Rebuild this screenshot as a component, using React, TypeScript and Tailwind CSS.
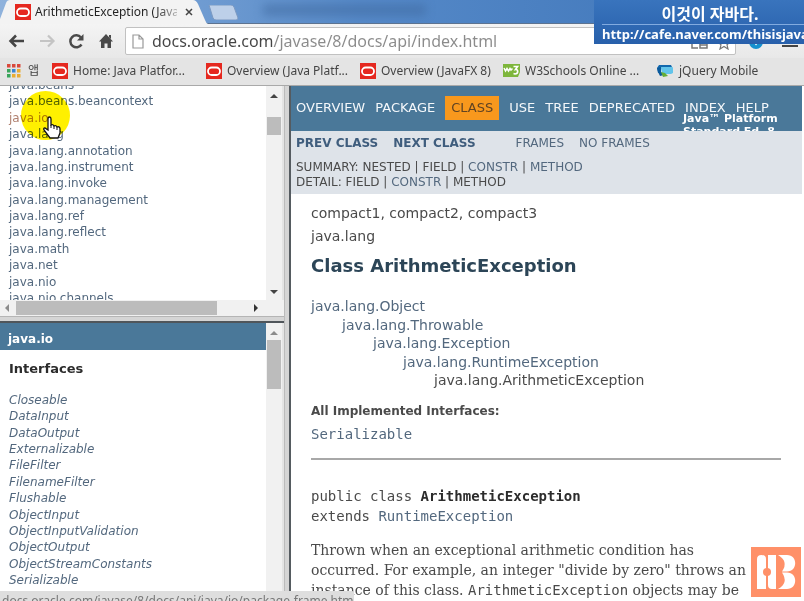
import type { ReactNode } from "react";

const packages = [
  "java.beans",
  "java.beans.beancontext",
  "java.io",
  "java.lang",
  "java.lang.annotation",
  "java.lang.instrument",
  "java.lang.invoke",
  "java.lang.management",
  "java.lang.ref",
  "java.lang.reflect",
  "java.math",
  "java.net",
  "java.nio",
  "java.nio.channels",
];

const interfaces = [
  "Closeable",
  "DataInput",
  "DataOutput",
  "Externalizable",
  "FileFilter",
  "FilenameFilter",
  "Flushable",
  "ObjectInput",
  "ObjectInputValidation",
  "ObjectOutput",
  "ObjectStreamConstants",
  "Serializable",
];

function OracleIcon() {
  return (
    <svg viewBox="0 0 16 16" className="size-4 shrink-0" aria-hidden="true">
      <rect width="16" height="16" fill="#e5281f" />
      <rect x="2" y="4.5" width="12" height="7.5" rx="3.75" fill="none" stroke="#fff" strokeWidth="1.8" />
    </svg>
  );
}

function W3Icon() {
  return (
    <svg viewBox="0 0 17 15" className="h-[15px] w-[17px] shrink-0" aria-hidden="true">
      <path d="M0 1h17v8l-2 5H0z" fill="#7eb63c" />
      <path d="M1 5l1.500 3L4 5.500l1.500 2.500L7 5.500l1 1.500 1.500-1.500" fill="none" stroke="#fff" strokeWidth="1.500" />
      <path d="M10.500 3.500h4l-2 3c3-.5 3 4.500-.5 4.500l-1.500-.5" fill="none" stroke="#fff" strokeWidth="1.700" />
    </svg>
  );
}

function JQueryIcon() {
  return (
    <svg viewBox="0 0 18 16" className="h-4 w-[18px] shrink-0" aria-hidden="true">
      <path d="M3 2h12l1 2H6L4 10H2L1 5z" fill="#1268ad" />
      <path d="M5 4h11q1 0 1 1v5l-2 1H6z" fill="#62c4ea" />
      <path d="M1 5l4-1v5l3 3-4 1-2-4z" fill="#0b5a9c" />
      <path d="M5 9l4 1 3 3-5 1z" fill="#65ad35" />
    </svg>
  );
}

function Bookmark({ icon, label, width }: { icon: ReactNode; label: string; width: string }) {
  return (
    <a href="#bookmark" className={`flex shrink-0 items-center gap-[5px] whitespace-nowrap ${width}`}>
      {icon}
      <span>{label}</span>
    </a>
  );
}

function Browser() {
  return (
    <header className="shrink-0 border-b border-[#a9a9a9] bg-[#e4e4e4] font-['Noto_Sans','Noto_Sans_CJK_KR',sans-serif] text-xs text-[#444]">
      <div className="flex h-6 items-stretch border-b border-[#5d7390] bg-linear-to-r from-[#8fb2dc] via-[#5589c8] via-45% to-[#3c73b7]">
        <div className="relative -mb-px flex w-[208px] items-center pr-3 pl-[15px]">
          <svg viewBox="0 0 208 24" preserveAspectRatio="none" className="absolute inset-0 size-full" aria-hidden="true">
            <path d="M0 24V19L6 3Q7 0 10 0H193Q196 0 198 4L205 20Q206 23 208 24Z" fill="#f3f3f3" />
          </svg>
          <span className="relative flex w-full items-center gap-1 text-[#222]">
            <OracleIcon />
            <span className="w-[142px] bg-linear-to-r from-[#222] from-85% to-[#bbb] bg-clip-text whitespace-nowrap text-transparent">
              ArithmeticException (Java
            </span>
            <button aria-label="Close tab" className="ml-1">
              <svg viewBox="0 0 8 8" className="size-2">
                <path d="M1 1l6 6M7 1L1 7" stroke="#444" strokeWidth="1.500" />
              </svg>
            </button>
          </span>
        </div>
        <button aria-label="New tab" className="mt-[5px] h-[15px] w-[30px]">
          <svg viewBox="0 0 30 15" className="size-full">
            <path d="M1 0H23Q25 0 26 2L30 13Q30 15 28 15H8Q6 15 5 13Z" fill="#bdd0e9" stroke="#7b99c1" />
          </svg>
        </button>
        <div className="mt-1 ml-6 h-3 w-[165px] rounded-full bg-[#40699f]/50 blur-xs" />
      </div>
      <div className="flex h-[34px] items-center bg-linear-to-b from-[#f4f4f4] to-[#e8e8e8] pr-1.5 pl-2">
        <button aria-label="Back" className="w-[31px]">
          <svg viewBox="0 0 17 16" className="h-4 w-[17px]">
            <path d="M16 8H3M8 2.500L2.500 8 8 13.500" fill="none" stroke="#444" strokeWidth="2.500" />
          </svg>
        </button>
        <button aria-label="Forward" className="w-[29px]">
          <svg viewBox="0 0 17 16" className="h-4 w-[17px]">
            <path d="M1 8h13M9 2.500L14.500 8 9 13.500" fill="none" stroke="#c4c4c4" strokeWidth="2.200" />
          </svg>
        </button>
        <button aria-label="Reload" className="w-[30px]">
          <svg viewBox="0 0 17 16" className="h-4 w-[17px]">
            <path d="M13.500 11.500A6 6 0 1 1 13 4.500" fill="none" stroke="#4a4a4a" strokeWidth="2.500" />
            <path d="M15.500 1v6.500H9z" fill="#4a4a4a" />
          </svg>
        </button>
        <button aria-label="Home" className="w-[27px]">
          <svg viewBox="0 0 16 16" className="size-4">
            <path d="M8 1l7 7.500h-2V15H9.500v-4.500h-3V15H3V8.500H1zM11 2h2v4l-2-2z" fill="#4a4a4a" />
          </svg>
        </button>
        <label className="flex h-7 max-w-[625px] min-w-0 flex-1 items-center gap-2 rounded-xs border border-[#c1c1c1] bg-white pr-1 pl-1.5">
          <svg viewBox="0 0 12 15" className="h-[15px] w-3 shrink-0" aria-hidden="true">
            <path d="M1 1h6l4 4v9H1zM7 1v4h4" fill="#fff" stroke="#999" strokeWidth="1.200" />
          </svg>
          <input
            aria-label="Address"
            defaultValue="docs.oracle.com/javase/8/docs/api/index.html"
            className="block min-w-0 flex-1 bg-transparent bg-linear-to-r from-[#444] from-[121px] to-[#8b8b8b] to-[121px] bg-clip-text text-base text-transparent outline-none"
          />
          <svg viewBox="0 0 18 14" className="mt-1 h-3.5 w-[18px] shrink-0" aria-hidden="true">
            <path d="M1 5v7h6M9 3h7v9H9zM9 9h7" fill="none" stroke="#777" strokeWidth="1.500" />
          </svg>
          <svg viewBox="0 0 14 14" className="mt-1 size-3.5 shrink-0" aria-hidden="true">
            <path d="M7 1l2 4.300 4 .5-3 3L11 13 7 10.500 3 13l1-4.200-3-3 4-.5z" fill="none" stroke="#777" strokeWidth="1.200" />
          </svg>
        </label>
        <svg viewBox="0 0 14 14" className="ml-3 size-4 shrink-0" aria-hidden="true">
          <circle cx="7" cy="8" r="6" fill="#1691cf" />
          <path d="M5 8l2 3 3-4" fill="#fff" />
        </svg>
        <svg viewBox="0 0 16 14" className="ml-[18px] h-3.5 w-4 shrink-0" aria-hidden="true">
          <path d="M0 3h16M0 12h16" stroke="#444" strokeWidth="2" />
        </svg>
      </div>
      <nav aria-label="Bookmarks" className="flex h-[27px] items-center overflow-hidden pb-0.5 pl-[7px]">
        <svg viewBox="0 0 14 14" className="mr-[7px] size-3.5 shrink-0" aria-hidden="true">
          <path d="M0 0h3.500v3.500H0zM5 0h3.500v3.500H5zM10 0h3.500v3.500H10z" fill="#d9483b" />
          <path d="M0 5h3.500v3.500H0zM0 10h3.500v3.500H0z" fill="#39a45a" />
          <path d="M5 5h3.500v3.500H5z" fill="#3986d4" />
          <path d="M10 5h3.500v3.500H10zM5 10h3.500v3.500H5zM10 10h3.500v3.500H10z" fill="#e9ad33" />
        </svg>
        <a href="#apps" className="w-6 shrink-0">앱</a>
        <Bookmark icon={<OracleIcon />} label="Home: Java Platfor..." width="w-[154px]" />
        <Bookmark icon={<OracleIcon />} label="Overview (Java Platf..." width="w-[154px]" />
        <Bookmark icon={<OracleIcon />} label="Overview (JavaFX 8)" width="w-[143px]" />
        <Bookmark icon={<W3Icon />} label="W3Schools Online ..." width="w-[153px]" />
        <Bookmark icon={<JQueryIcon />} label="jQuery Mobile" width="w-[110px]" />
      </nav>
    </header>
  );
}

function Triangle({ className, d }: { className: string; d: string }) {
  return (
    <svg viewBox="0 0 8 8" className={`size-2 shrink-0 ${className}`} aria-hidden="true">
      <path d={d} />
    </svg>
  );
}

function Frames() {
  return (
    <aside className="flex w-[284px] shrink-0 flex-col text-xs leading-4 text-[#53687e]">
      <section aria-label="Packages" className="flex h-[230px] shrink-0 flex-col">
        <div className="flex min-h-0 flex-1">
          <div className="relative flex-1 overflow-hidden pl-[9px]">
            <ul className="-mt-[9px] flex h-[229px] flex-col justify-between">
              {packages.map((name) => (
                <li key={name}>
                  <a href="#package" className={name === "java.io" ? "text-[#b08070]" : ""}>{name}</a>
                </li>
              ))}
            </ul>
            <div className="absolute top-[5px] left-[21px] size-[49px] rounded-full bg-[#fff000] mix-blend-multiply" />
            <svg viewBox="0 0 20 24" className="absolute top-[30px] left-[42px] h-6 w-5" aria-hidden="true">
              <path
                d="M6 14V3q0-2 1.500-2T9 3v6q2-1 3 1 2-1 3 1 3-1 3 2v4l-2 5H8l-6-8q-1-2 1-2z"
                fill="#fff"
                stroke="#111"
                strokeWidth="1.300"
              />
              <path d="M9 9v3M12 10v3M15 11v3" stroke="#111" />
            </svg>
          </div>
          <div className="flex w-4 flex-col items-center bg-[#f1f1f1] py-1">
            <Triangle d="M0 6l4-4 4 4z" className="mt-0.5 fill-[#444]" />
            <div className="mt-[17px] h-[18px] w-3.5 bg-[#bcbcbc]" />
            <Triangle d="M0 2l4 4 4-4z" className="mt-auto fill-[#444]" />
          </div>
          <div className="w-0.5 bg-[#e4e4e4]" />
        </div>
        <div className="flex h-4 items-center bg-[#f1f1f1] pr-6 pl-[3px]">
          <Triangle d="M6 0L2 4l4 4z" className="fill-[#8b8b8b]" />
          <div className="ml-[5px] h-3.5 w-[201px] bg-[#bcbcbc]" />
          <Triangle d="M2 0l4 4-4 4z" className="ml-auto fill-[#333]" />
        </div>
      </section>
      <div className="h-[7px] shrink-0 border-t border-b-2 border-t-[#b5b5b5] border-b-[#50565b] bg-[#d5d5d5]" />
      <section aria-label="java.io" className="flex min-h-0 flex-1">
        <div className="flex-1 overflow-hidden">
          <h2 className="bg-[#4a7899] pt-2 pb-[3px] pl-2 font-bold text-white">java.io</h2>
          <h3 className="mt-[11px] pl-[9px] text-[13px] font-bold text-[#2c2c2c]">Interfaces</h3>
          <ul className="mt-[15px] flex h-[196px] flex-col justify-between pl-[9px] italic">
            {interfaces.map((name) => (
              <li key={name}><a href="#interface">{name}</a></li>
            ))}
          </ul>
        </div>
        <div className="flex w-4 flex-col items-center bg-[#f1f1f1] pt-1.5">
          <Triangle d="M0 6l4-4 4 4z" className="fill-[#8b8b8b]" />
          <div className="mt-[3px] h-[49px] w-3.5 bg-[#bcbcbc]" />
        </div>
        <div className="w-0.5 bg-[#e4e4e4]" />
      </section>
    </aside>
  );
}

function Doc() {
  return (
    <main className="min-w-0 flex-1 overflow-hidden text-sm text-[#4a4a4a]">
      <div className="mr-0.5">
        <div className="relative h-[45px] overflow-hidden bg-[#4a7899] text-[13px] leading-4 text-[#f4f7fa]">
          <nav aria-label="Top" className="flex items-center gap-2.5 pt-2.5 pl-[5px] whitespace-nowrap">
            <a href="#overview">OVERVIEW</a>
            <a href="#package">PACKAGE</a>
            <a href="#class" className="bg-[#f8981d] px-1.5 py-1 text-[#604323]">CLASS</a>
            <a href="#use">USE</a>
            <a href="#tree">TREE</a>
            <a href="#deprecated">DEPRECATED</a>
            <a href="#index">INDEX</a>
            <a href="#help">HELP</a>
          </nav>
          <div className="absolute top-[26px] right-5 w-[99px] text-[11px] leading-[13px] font-bold whitespace-nowrap text-white">
            Java™ Platform
            <br />
            Standard Ed. 8
          </div>
        </div>
        <div className="bg-[#dee3e9] px-[5px] pt-1 pb-1 text-xs leading-4">
          <div className="flex whitespace-nowrap text-[#53687e]">
            <a href="#prev" className="mr-[15px] font-bold text-[#3f5d7d]">PREV CLASS</a>
            <a href="#next" className="mr-10 font-bold text-[#3f5d7d]">NEXT CLASS</a>
            <a href="#frames" className="mr-[15px]">FRAMES</a>
            <a href="#noframes">NO FRAMES</a>
          </div>
          <div className="mt-[9px] leading-[15px]">
            <p>SUMMARY: NESTED | FIELD | <a href="#constr" className="text-[#53687e]">CONSTR</a> | <a href="#method" className="text-[#53687e]">METHOD</a></p>
            <p>DETAIL: FIELD | <a href="#constr-detail" className="text-[#53687e]">CONSTR</a> | METHOD</p>
          </div>
        </div>
      </div>
      <div className="pt-2.5 pr-[23px] pl-5">
        <p className="leading-[18px]">compact1, compact2, compact3</p>
        <p className="mt-[5px] leading-[18px]">java.lang</p>
        <h1 className="mt-[9px] text-lg leading-6 font-bold text-[#2c4557]">Class ArithmeticException</h1>
        <ul className="mt-[19px] flex h-[92px] flex-col justify-between leading-[18px] text-[#53687e]">
          <li><a href="#object">java.lang.Object</a></li>
          <li className="pl-[31px]"><a href="#throwable">java.lang.Throwable</a></li>
          <li className="pl-[62px]"><a href="#exception">java.lang.Exception</a></li>
          <li className="pl-[92px]"><a href="#runtime">java.lang.RuntimeException</a></li>
          <li className="pl-[123px] text-[#4a4a4a]">java.lang.ArithmeticException</li>
        </ul>
        <h2 className="mt-3.5 text-xs leading-4 font-bold">All Implemented Interfaces:</h2>
        <p className="mt-1.5 font-['DejaVu_Sans_Mono',monospace] leading-[18px] text-[#53687e]"><a href="#serializable">Serializable</a></p>
        <hr className="mt-[15px] border-t-2 border-[#a8a8a8]" />
        <p className="mt-[26px] font-['DejaVu_Sans_Mono',monospace] leading-5">
          public class <strong className="text-[#2c2c2c]">ArithmeticException</strong>
          <br />
          extends <a href="#runtime-exception" className="text-[#53687e]">RuntimeException</a>
        </p>
        <p className="mt-3.5 font-['DejaVu_Serif',serif] leading-5 whitespace-nowrap">
          Thrown when an exceptional arithmetic condition has
          <br />
          occurred. For example, an integer "divide by zero" throws an
          <br />
          instance of this class. <code className="font-['DejaVu_Sans_Mono',monospace]">ArithmeticException</code> objects may be
        </p>
      </div>
    </main>
  );
}

export default function App() {
  return (
    <div className="relative flex h-screen flex-col overflow-hidden bg-white font-['DejaVu_Sans',sans-serif]">
      <Browser />
      <div className="flex min-h-0 flex-1">
        <Frames />
        <div className="w-[7px] shrink-0 border-r-2 border-l border-r-[#555b60] border-l-[#bbb] bg-[#d5d5d5]" />
        <Doc />
      </div>
      <div className="absolute top-0 right-0 h-11 w-[210px] overflow-hidden bg-linear-to-b from-[#3974bd] to-[#2860ab] font-['Noto_Sans','Noto_Sans_CJK_KR',sans-serif] font-bold text-white">
        <p className="ml-2 border-b border-[#82abe0] pt-1 pl-[14px] text-center text-base leading-5">이것이 자바다.</p>
        <a href="#cafe" className="ml-2 block text-[13px] leading-[18px] whitespace-nowrap">http://cafe.naver.com/thisisjava</a>
      </div>
      <div className="absolute bottom-0 left-0 h-[10px] w-[354px] overflow-hidden rounded-tr-xs bg-[#dedede] pt-0.5 pl-0.5 font-['Noto_Sans',sans-serif] text-xs leading-4 whitespace-nowrap text-[#777]">
        docs.oracle.com/javase/8/docs/api/java/io/package-frame.html
      </div>
      <svg viewBox="0 0 50 50" className="absolute right-[3px] bottom-1 size-[50px]" aria-label="HB">
        <rect width="50" height="50" fill="#ff9068" />
        <path d="M6 12q0-4 4.500-4t4.500 4v30H6zM17 8h8v34h-4q-4 0-4-4z" fill="#fff" />
        <circle cx="16" cy="25" r="4" fill="#ff9068" />
        <path d="M27 8h9c11 0 11 16.500 0 16.500h-5q7-10-4-16.500zM31 25.500h5c11 0 11 16.500 0 16.500h-9q11-6 4-16.500z" fill="#fff" />
      </svg>
    </div>
  );
}
